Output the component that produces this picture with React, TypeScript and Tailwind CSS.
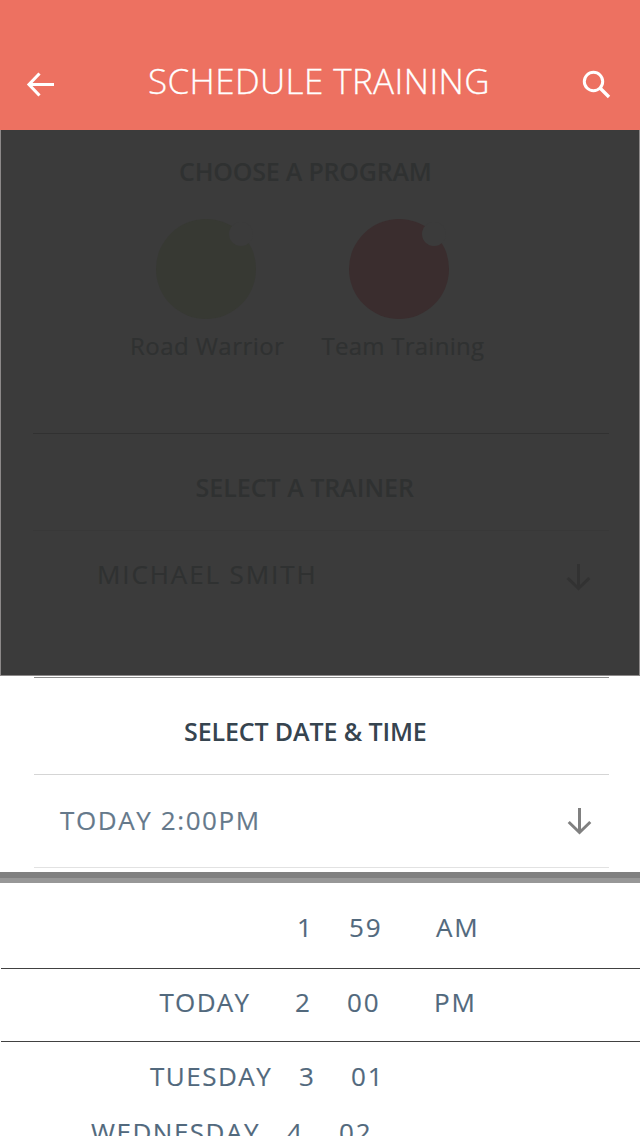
import type { ReactNode } from "react";

type Cell = { text: string; className: string };

function Label({ className, children }: { className: string; children: ReactNode }) {
  return (
    <span className={`block shrink-0 whitespace-pre [-webkit-text-stroke:0.15px_currentColor] ${className}`}>
      {children}
    </span>
  );
}

function BackIcon() {
  return (
    <svg width="30" height="28" viewBox="0 0 30 28" fill="none" stroke="#fff" strokeWidth="3.1">
      <path d="M29 14.5H4M14.5 3.5L4 14.5L14.5 25.5" />
    </svg>
  );
}

function SearchIcon() {
  return (
    <svg width="30" height="30" viewBox="0 0 30 30" fill="none" stroke="#fff">
      <circle cx="11.5" cy="11.5" r="9.2" strokeWidth="3" />
      <path d="M18 18L27 27" strokeWidth="3.4" />
    </svg>
  );
}

function DownIcon({ className }: { className: string }) {
  return (
    <svg className={className} width="26" height="28" viewBox="0 0 26 28" fill="none" stroke="currentColor" strokeWidth="3">
      <path d="M12.5 0V24.5M1.7 14L12.5 24.5L23.3 14" />
    </svg>
  );
}

function ProgramDisc({ className }: { className: string }) {
  return (
    <svg className={className} width="100" height="100" viewBox="0 0 100 100">
      <circle cx="50" cy="50" r="50" fill="currentColor" />
      <circle cx="85" cy="15" r="12" fill="#3b3b3b" />
    </svg>
  );
}

const rows: { height: string; cells: Cell[] }[] = [
  {
    height: "h-[86px] pt-[26px]",
    cells: [
      { text: "", className: "w-[297px]" },
      { text: "1", className: "w-[52px]" },
      { text: "59", className: "w-[87px]" },
      { text: "AM", className: "" },
    ],
  },
  {
    height: "h-[73px] pt-[15px]",
    cells: [
      { text: "TODAY", className: "w-[295px] pl-[159.5px] tracking-[1.3px]" },
      { text: "2", className: "w-[52px]" },
      { text: "00", className: "w-[87px]" },
      { text: "PM", className: "" },
    ],
  },
  {
    height: "h-[57px] pt-[16px]",
    cells: [
      { text: "TUESDAY", className: "w-[299px] pl-[150px] tracking-[1.5px]" },
      { text: "3", className: "w-[52px]" },
      { text: "01", className: "" },
    ],
  },
  {
    height: "h-[37px] pt-[15px]",
    cells: [
      { text: "WEDNESDAY", className: "w-[287px] pl-[91px] tracking-[1.5px]" },
      { text: "4", className: "w-[52px]" },
      { text: "02", className: "" },
    ],
  },
];

export default function App() {
  return (
    <div className="flex h-[1136px] w-[640px] flex-col overflow-hidden bg-white font-['Open_Sans',sans-serif] text-[26px] leading-[36px]">
      <header className="flex h-[130px] shrink-0 items-start bg-[#ed7161] text-white">
        <div className="w-[148px] pt-[70px] pl-[25px]">
          <BackIcon />
        </div>
        <h1 className="w-[434px] pt-[57px] text-[35px] leading-[48px] font-light tracking-[0.4px] whitespace-pre [-webkit-text-stroke:0.3px_currentColor]">SCHEDULE TRAINING</h1>
        <div className="pt-[70px]">
          <SearchIcon />
        </div>
      </header>

      <section className="flex h-[546px] shrink-0 flex-col border-x border-b border-[#8c8989] bg-[#3b3b3b] text-[#2f3131]">
        <h2 className="h-[89px] pt-[23px] pl-[178px] text-[25px] font-semibold tracking-[-0.2px] whitespace-pre">CHOOSE A PROGRAM</h2>
        <div className="flex h-[109px] pl-[155px]">
          <ProgramDisc className="mr-[93px] text-[#373933]" />
          <ProgramDisc className="text-[#3a2d2e]" />
        </div>
        <div className="flex h-[105px] pl-[129px] text-[24px]">
          <Label className="w-[191.5px] tracking-[0.45px]">Road Warrior</Label>
          <Label className="tracking-[0.25px]">Team Training</Label>
        </div>
        <div className="mr-[30px] ml-[32px] h-px bg-[#313131]" />
        <h2 className="h-[96px] pt-[35px] pl-[194.5px] text-[25px] font-semibold tracking-[0px] whitespace-pre">SELECT A TRAINER</h2>
        <div className="mr-[30px] ml-[32px] h-px bg-[#383838]" />
        <div className="flex pt-[25px] pl-[96px]">
          <Label className="w-[469px] tracking-[1.9px]">MICHAEL SMITH</Label>
          <DownIcon className="mt-[8px] text-[#323232]" />
        </div>
      </section>

      <section className="flex h-[196px] shrink-0 flex-col pt-px text-[#36444f]">
        <div className="mr-[31px] ml-[34px] h-px bg-[#8a8a8a]" />
        <h2 className="h-[96px] pt-[35px] pl-[184px] text-[25px] font-semibold tracking-[-0.12px] whitespace-pre">SELECT DATE &amp; TIME</h2>
        <div className="mr-[31px] ml-[34px] h-px bg-[#d5d5d5]" />
        <div className="flex h-[92px] pt-[27px] pl-[60px] text-[#65798b]">
          <Label className="w-[507px] tracking-[1.6px]">TODAY 2:00PM</Label>
          <DownIcon className="mt-[6px] text-[#808080]" />
        </div>
        <div className="mr-[31px] ml-[34px] h-px bg-[#e2e2e2]" />
      </section>
      <div className="h-[6px] shrink-0 bg-[#808080]" />
      <div className="h-[5px] shrink-0 bg-[#979797]" />

      <section className="flex flex-col tracking-[1.9px] text-[#52697d]">
        {rows.map((row, i) => (
          <div key={row.cells[1].text} className="flex flex-col">
            <div className={`flex shrink-0 ${row.height}`}>
              {row.cells.map((cell, j) => (
                <Label key={j} className={cell.className}>{cell.text}</Label>
              ))}
            </div>
            {i < 2 && <div className="-mt-px ml-px h-px shrink-0 bg-[#414141]" />}
          </div>
        ))}
      </section>
    </div>
  );
}
